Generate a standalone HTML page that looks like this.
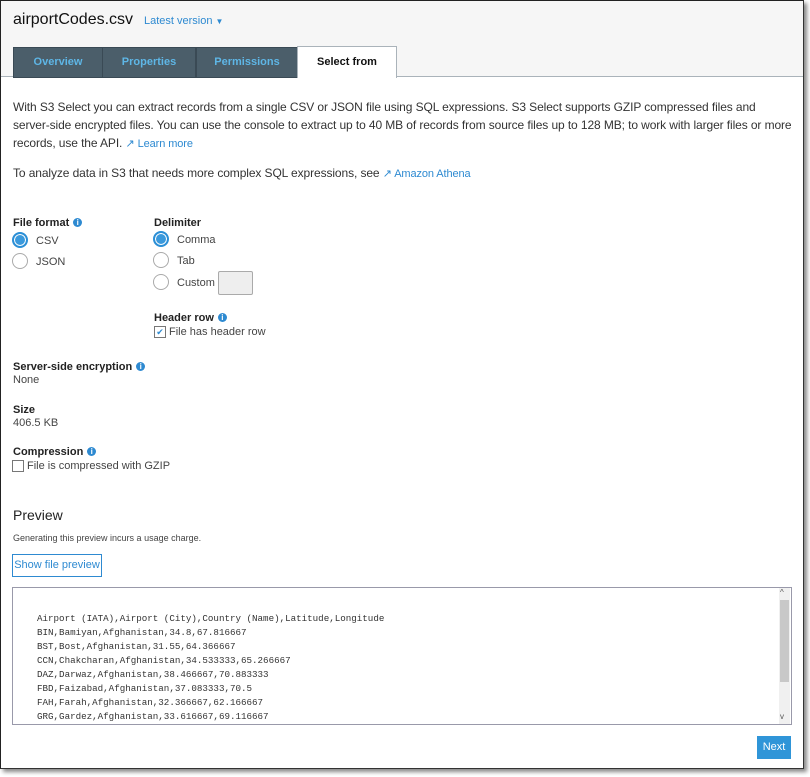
<!DOCTYPE html><html><head><style>
body{margin:0;width:810px;height:777px;background:#fff;font-family:"Liberation Sans",sans-serif;position:relative;overflow:hidden}
.frame{position:absolute;left:0;top:0;width:802px;height:767px;border-left:1px solid #222;border-top:1px solid #222;border-right:1px solid #333;border-bottom:1px solid #333;box-shadow:3px 3px 4px #888;background:#fff;overflow:hidden}
.hdr{position:absolute;left:0;top:0;width:802px;height:75px;background:#f6f6f6;border-bottom:1px solid #aab3ba}
.a{position:absolute;white-space:nowrap}
.tab{position:absolute;top:46px;height:29px;background:#4b5e6a;color:#5eb6e6;font-weight:bold;font-size:11px;text-align:center;line-height:29px;border:1px solid #3a4a55}
.p{font-size:12px;color:#333}
.lbl{font-size:11px;font-weight:bold;color:#222}
.s{font-size:11px;color:#444}
.r{position:absolute;width:16px;height:16px;border:1px solid #aaa;border-radius:50%;background:#fff;box-sizing:border-box}
.r.on{border:2px solid #2b8fd6;background:#3a99dc;box-shadow:inset 0 0 0 1px #fff}
.i{display:inline-block;width:9px;height:9px;border-radius:50%;background:#2e8ad1;color:#fff;font-size:8px;line-height:9px;text-align:center;font-weight:bold;vertical-align:1px;margin-left:4px}
.lk{color:#2e8ad1}
.cb{position:absolute;width:10px;height:10px;border:1px solid #777;background:#fff}
pre{margin:0;font-family:"Liberation Mono",monospace;font-size:9.2px;line-height:14px;color:#333;white-space:pre!important}
</style></head><body><div class="frame">
<div class="hdr"></div>
<div class="a" style="left:12px;top:10px;font-size:16px;color:#111">airportCodes.csv</div>
<div class="a lk" style="left:143px;top:14px;font-size:11px">Latest version <span style="font-size:8px">▼</span></div>
<div class="tab" style="left:12px;width:88px">Overview</div>
<div class="tab" style="left:101px;width:92px">Properties</div>
<div class="tab" style="left:195px;width:100px">Permissions</div>
<div class="a" style="left:296px;top:45px;width:98px;height:31px;background:#fff;border:1px solid #aab3ba;border-bottom:none;text-align:center;line-height:31px;font-size:11px;font-weight:bold;color:#111">Select from</div>
<div class="a p" style="left:12px;top:97px;line-height:18px;letter-spacing:-0.1px">With S3 Select you can extract records from a single CSV or JSON file using SQL expressions. S3 Select supports GZIP compressed files and<br>server-side encrypted files. You can use the console to extract up to 40 MB of records from source files up to 128 MB; to work with larger files or more<br>records, use the API. <span class="lk" style="font-size:11px">&#x2197;&#xFE0E; Learn more</span></div>
<div class="a p" style="left:12px;top:165px;letter-spacing:-0.1px">To analyze data in S3 that needs more complex SQL expressions, see <span class="lk" style="font-size:11px">&#x2197;&#xFE0E; Amazon Athena</span></div>
<div class="a lbl" style="left:12px;top:216px">File format<span class="i">i</span></div>
<div class="r on" style="left:11px;top:231px"></div><div class="a s" style="left:35px;top:234px">CSV</div>
<div class="r" style="left:11px;top:252px"></div><div class="a s" style="left:35px;top:255px">JSON</div>
<div class="a lbl" style="left:153px;top:216px">Delimiter</div>
<div class="r on" style="left:152px;top:230px"></div><div class="a s" style="left:176px;top:233px">Comma</div>
<div class="r" style="left:152px;top:251px"></div><div class="a s" style="left:176px;top:254px">Tab</div>
<div class="r" style="left:152px;top:273px"></div><div class="a s" style="left:176px;top:276px">Custom</div>
<div class="a" style="left:217px;top:270px;width:33px;height:22px;background:#eee;border:1px solid #aaa;border-radius:2px"></div>
<div class="a lbl" style="left:153px;top:311px">Header row<span class="i">i</span></div>
<div class="cb" style="left:153px;top:325px;color:#2e8ad1;font-size:9px;line-height:10px;text-align:center">✔</div><div class="a s" style="left:168px;top:325px">File has header row</div>
<div class="a lbl" style="left:12px;top:360px">Server-side encryption<span class="i">i</span></div>
<div class="a s" style="left:12px;top:373px">None</div>
<div class="a lbl" style="left:12px;top:403px">Size</div>
<div class="a s" style="left:12px;top:416px">406.5 KB</div>
<div class="a lbl" style="left:12px;top:445px">Compression<span class="i">i</span></div>
<div class="cb" style="left:11px;top:459px"></div><div class="a s" style="left:26px;top:459px">File is compressed with GZIP</div>
<div class="a" style="left:12px;top:506px;font-size:14px;color:#222">Preview</div>
<div class="a" style="left:12px;top:532px;font-size:9px;color:#444">Generating this preview incurs a usage charge.</div>
<div class="a lk" style="left:11px;top:553px;width:88px;height:21px;border:1px solid #2e8ad1;font-size:11px;line-height:21px;text-align:center">Show file preview</div>
<div class="a" style="left:11px;top:586px;width:778px;height:136px;border:1px solid #99a;background:#fff;overflow:hidden">
<div class="a" style="left:766px;top:0;width:11px;height:136px;background:#f0f0f0"></div>
<div class="a" style="left:767px;top:12px;width:9px;height:82px;background:#c8c8c8"></div>
<div class="a" style="left:767px;top:0;font-size:8px;color:#555">^</div>
<div class="a" style="left:767px;top:124px;font-size:8px;color:#555">v</div>
<pre class="a" style="left:24px;top:24px">Airport (IATA),Airport (City),Country (Name),Latitude,Longitude
BIN,Bamiyan,Afghanistan,34.8,67.816667
BST,Bost,Afghanistan,31.55,64.366667
CCN,Chakcharan,Afghanistan,34.533333,65.266667
DAZ,Darwaz,Afghanistan,38.466667,70.883333
FBD,Faizabad,Afghanistan,37.083333,70.5
FAH,Farah,Afghanistan,32.366667,62.166667
GRG,Gardez,Afghanistan,33.616667,69.116667</pre>
</div>
<div class="a" style="left:756px;top:735px;width:34px;height:23px;background:#2f95d8;color:#fff;font-size:11px;line-height:23px;text-align:center">Next</div>
</div></body></html>
